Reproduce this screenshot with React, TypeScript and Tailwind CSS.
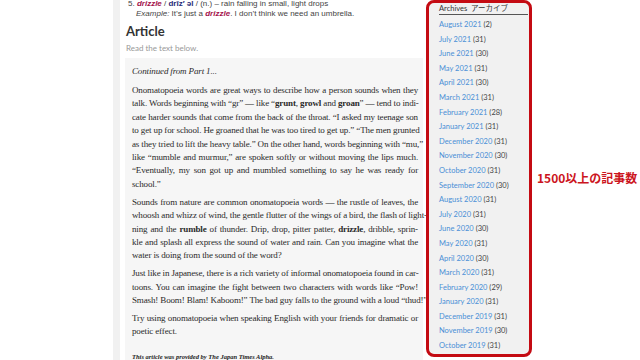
const archives: [string, number][] = [
  ['August 2021', 2],
  ['July 2021', 31],
  ['June 2021', 30],
  ['May 2021', 31],
  ['April 2021', 30],
  ['March 2021', 31],
  ['February 2021', 28],
  ['January 2021', 31],
  ['December 2020', 31],
  ['November 2020', 30],
  ['October 2020', 31],
  ['September 2020', 30],
  ['August 2020', 31],
  ['July 2020', 31],
  ['June 2020', 30],
  ['May 2020', 31],
  ['April 2020', 30],
  ['March 2020', 31],
  ['February 2020', 29],
  ['January 2020', 31],
  ['December 2019', 31],
  ['November 2019', 30],
  ['October 2019', 31],
  ['September 2019', 30],
];

// each paragraph is a list of lines; the last line of a paragraph is not justified
const paragraphs: React.ReactNode[][] = [
  [
    'Onomatopoeia words are great ways to describe how a person sounds when they',
    <>
      talk. Words beginning with “gr” — like “<b>grunt</b>, <b>growl</b> and <b>groan</b>” — tend to indi-
    </>,
    'cate harder sounds that come from the back of the throat. “I asked my teenage son',
    'to get up for school. He groaned that he was too tired to get up.” “The men grunted',
    'as they tried to lift the heavy table.” On the other hand, words beginning with “mu,”',
    'like “mumble and murmur,” are spoken softly or without moving the lips much.',
    '“Eventually, my son got up and mumbled something to say he was ready for',
    'school.”',
  ],
  [
    'Sounds from nature are common onomatopoeia words — the rustle of leaves, the',
    'whoosh and whizz of wind, the gentle flutter of the wings of a bird, the flash of light-',
    <>
      ning and the <b>rumble</b> of thunder. Drip, drop, pitter patter, <b>drizzle</b>, dribble, sprin-
    </>,
    'kle and splash all express the sound of water and rain. Can you imagine what the',
    'water is doing from the sound of the word?',
  ],
  [
    'Just like in Japanese, there is a rich variety of informal onomatopoeia found in car-',
    'toons. You can imagine the fight between two characters with words like “Pow!',
    'Smash! Boom! Blam! Kaboom!” The bad guy falls to the ground with a loud “thud!”',
  ],
  [
    'Try using onomatopoeia when speaking English with your friends for dramatic or',
    'poetic effect.',
  ],
];

function Paragraph({ lines }: { lines: React.ReactNode[] }) {
  return (
    <div className="mb-[4.6px]">
      {lines.map((line, i) => (
        <div
          key={i}
          className={`h-[13.4px] whitespace-nowrap leading-[13.4px] ${
            i < lines.length - 1 ? 'text-justify [text-align-last:justify]' : ''
          }`}
        >
          {line}
        </div>
      ))}
    </div>
  );
}

export default function App() {
  return (
    <div className="flex h-[360px] w-[640px] overflow-hidden bg-white">
      <div className="w-[113px] shrink-0" />
      <div className="w-[7px] shrink-0 bg-[#f1f1f1]" />

      {/* main column */}
      <div className="w-[306px] shrink-0 pl-[5px] pr-[3px]">
        <div className="-mt-[1px] pl-[3px] font-['Liberation_Sans',Arial,sans-serif] text-[8px] leading-[10px] text-[#444]">
          <div>
            5. <b className="italic text-[#a3124b]">drizzle</b> / <b className="text-[#1f2a78]">drĭz′ əl</b> / (n.) – rain
            falling in small, light drops
          </div>
          <div className="pl-[8px]">
            <i>Example:</i> It’s just a <b className="italic text-[#a3124b]">drizzle</b>. I don’t think we need an
            umbrella.
          </div>
        </div>

        <h2 className="mt-[4px] pl-[1px] font-['Lato',sans-serif] text-[13px] font-bold leading-[16px] text-[#333]">
          Article
        </h2>
        <p className="mt-[4px] pl-[1px] font-['Lato',sans-serif] text-[8px] leading-[10px] text-[#999]">
          Read the text below.
        </p>

        <div className="mt-[5px] bg-[#f6f6f6] pl-[7px] pr-[5px] pt-[6px] font-['Liberation_Serif','Times_New_Roman',serif] text-[9px] tracking-[-0.14px] text-[#2a2a2a]">
          <div className="mb-[6px] h-[14px] leading-[14px] italic">Continued from Part 1...</div>
          {paragraphs.map((p, i) => (
            <Paragraph key={i} lines={p} />
          ))}
          <div className="mt-[14px] text-[6.5px] font-bold italic leading-[8px] tracking-normal text-[#222]">
            This article was provided by The Japan Times Alpha.
          </div>
        </div>
      </div>

      {/* archives sidebar */}
      <div className="h-[357px] w-[106px] shrink-0 overflow-hidden rounded-[8px] border-[3px] border-[#c40b13] bg-[#f1f1f1] pl-[10px] pr-[1px] font-['Lato','Noto_Sans_CJK_JP',sans-serif]">
        <div className="mt-[1px] border-b border-[#555] pb-[1px] text-[7.5px] leading-[9px] text-[#333]">
          Archives&nbsp;&nbsp;アーカイブ
        </div>
        <ul className="mt-[3px]">
          {archives.map(([label, count]) => (
            <li key={label} className="h-[14.6px] text-[7.5px] leading-[14.6px] text-[#444]">
              <span className="text-[#4a8fd6]">{label}</span> ({count})
            </li>
          ))}
        </ul>
      </div>

      <div className="flex min-w-0 flex-1 items-center pb-[5px] pl-[5px]">
        <span className="whitespace-nowrap font-['Noto_Sans_CJK_JP',sans-serif] text-[12px] font-bold text-[#cc1420]">
          1500以上の記事数
        </span>
      </div>
    </div>
  );
}
